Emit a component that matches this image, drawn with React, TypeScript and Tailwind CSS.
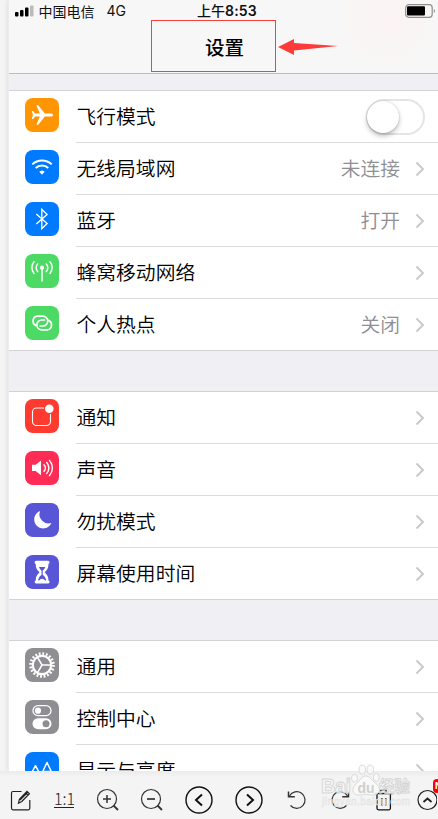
import type { ReactNode } from 'react';

interface RowProps {
  label: string;
  color: string;
  icon: ReactNode;
  value?: string;
  toggle?: boolean;
}

const stroke = { fill: 'none', stroke: '#fff', strokeLinecap: 'round', strokeLinejoin: 'round' } as const;

const icons = {
  plane: (
    <path fill="#fff" d="M28 17c0-1-1-1.500-2.200-1.500h-5.900L13.200 7.200h-1.900l3.600 8.300h-4.700l-2.100-2.600H6.800L7.900 17l-1.100 4.100h1.300l2.100-2.600h4.700l-3.600 8.300h1.900l6.700-8.300h5.900C27 18.500 28 18 28 17z" />
  ),
  wifi: (
    <g {...stroke} strokeLinecap="butt" strokeWidth={2}>
      <path d="M7.300 14.400a14 14 0 0 1 19.400 0" />
      <path d="M10.700 18a9.200 9.200 0 0 1 12.600 0" />
      <path d="M14.800 21.800a3.500 3.500 0 0 1 4.400 0L17 24.200z" fill="#fff" strokeWidth={1} />
    </g>
  ),
  bluetooth: <path {...stroke} strokeLinecap="butt" strokeLinejoin="miter" strokeWidth={1.350} d="M11.300 12l10.800 9.500-5.300 5.200V7.300l5.300 5.200L11.300 22" />,
  cellular: (
    <g {...stroke} strokeWidth={1.500}>
      <path d="M17 15v12" />
      <circle cx="17" cy="13.700" r="2.100" fill="#fff" stroke="none" />
      <path d="M12.700 10a5.500 5.500 0 0 0 0 7.600M21.300 10a5.500 5.500 0 0 1 0 7.600M9 7.800a9 9 0 0 0 0 11.600M25 7.800a9 9 0 0 1 0 11.600" />
    </g>
  ),
  hotspot: (
    <g {...stroke} strokeWidth={1.700}>
      <path d="M11.200 19.600a4.900 4.900 0 0 1 1-9.400h5.600a4.900 4.900 0 0 1 0 9.800h-2.600" />
      <path d="M23.400 14.400a4.900 4.900 0 0 1-1 9.400h-5.600a4.900 4.900 0 0 1 0-9.800h2.600" />
    </g>
  ),
  notice: (
    <g>
      <path {...stroke} strokeWidth={1.100} d="M18.800 9h-7.300a4 4 0 0 0-4 4v9.500a4 4 0 0 0 4 4h10a4 4 0 0 0 4-4v-7" />
      <circle cx="24.300" cy="9.800" r="4.300" fill="#fff" />
    </g>
  ),
  sound: (
    <g>
      <path fill="#fff" d="M7 13.800h3.700l5.300-4.300v14.800l-5.300-4.300H7z" />
      <path {...stroke} strokeWidth={1.400} d="M19 13.700a5 5 0 0 1 0 6.600M21.700 11.500a8.200 8.200 0 0 1 0 11M24.500 9.400a11.500 11.500 0 0 1 0 15.200" />
    </g>
  ),
  moon: <path fill="#fff" d="M15.100 8a9 9 0 1 0 11.300 12.100A9.200 9.200 0 0 1 15.100 8z" />,
  hourglass: (
    <g>
      <path fill="#fff" d="M11 5.800h12.200a1.600 1.600 0 0 1 .3 3.100c0 4.200-1.500 6.200-3.900 8.300 2.400 2.200 3.900 4.200 3.900 8.200a1.600 1.600 0 0 1-.3 3.100H11a1.600 1.600 0 0 1-.3-3.100c0-4 1.500-6 3.900-8.200-2.400-2.100-3.900-4.100-3.900-8.300A1.600 1.600 0 0 1 11 5.800z" />
      <path fill="#5856d6" d="M14 12h6.300c-.6 1.700-1.600 2.700-2.600 3.600v4.300c1.600.9 3 2.300 3.500 5.500h-8.100c.5-3.200 1.900-4.600 3.400-5.500v-4.300c-1-.9-1.900-1.900-2.500-3.600z" />
      <path stroke="#fff" strokeWidth={1} fill="#fff" d="M14.500 25.500c1.200-.8 1.900-1.300 2.600-1.300s1.500.5 2.700 1.300z" />
    </g>
  ),
  gear: (
    <g stroke="#fff" fill="none">
      <circle cx="17" cy="17" r="9.200" strokeWidth={2.200} />
      <circle cx="17" cy="17" r="11.400" strokeWidth={2.800} strokeDasharray="1.850 1.731" />
      <path strokeWidth={1.500} d="M17 17h9M17 17l-4.600-7.900M17 17l-4.600 7.900" />
    </g>
  ),
  control: (
    <g>
      <rect x="8" y="5.700" width="18" height="9.900" rx="4.950" {...stroke} strokeWidth={1.300} />
      <circle cx="13" cy="10.650" r="3.100" fill="#fff" />
      <rect x="7.500" y="18.200" width="19" height="11" rx="5.500" fill="#fff" />
      <circle cx="21" cy="23.700" r="3.500" fill="#8e8e93" />
    </g>
  ),
  display: (
    <g {...stroke} strokeWidth={1.500}>
      <path d="M5.500 23l5-9.300 5 9.300M7 20.500h7M16 23l6-12.500L28 23M18 19.500h8" />
    </g>
  )
};

const groups: RowProps[][] = [
  [
    { label: '飞行模式', color: 'bg-[#ff9500]', icon: icons.plane, toggle: true },
    { label: '无线局域网', color: 'bg-[#007aff]', icon: icons.wifi, value: '未连接' },
    { label: '蓝牙', color: 'bg-[#007aff]', icon: icons.bluetooth, value: '打开' },
    { label: '蜂窝移动网络', color: 'bg-[#4cd964]', icon: icons.cellular },
    { label: '个人热点', color: 'bg-[#4cd964]', icon: icons.hotspot, value: '关闭' }
  ],
  [
    { label: '通知', color: 'bg-[#ff3b30]', icon: icons.notice },
    { label: '声音', color: 'bg-[#ff2d55]', icon: icons.sound },
    { label: '勿扰模式', color: 'bg-[#5856d6]', icon: icons.moon },
    { label: '屏幕使用时间', color: 'bg-[#5856d6]', icon: icons.hourglass }
  ],
  [
    { label: '通用', color: 'bg-[#8e8e93]', icon: icons.gear },
    { label: '控制中心', color: 'bg-[#8e8e93]', icon: icons.control },
    { label: '显示与亮度', color: 'bg-[#007aff]', icon: icons.display }
  ]
];

function Row({ label, color, icon, value, toggle }: RowProps) {
  return (
    <div className="group flex h-[52px] shrink-0 pl-[17px] last:h-[51px]">
      <div className={`mt-[7px] h-[34px] w-[34px] shrink-0 rounded-[8px] ${color}`}>
        <svg width="34" height="34" viewBox="0 0 34 34">{icon}</svg>
      </div>
      <div className="ml-[17px] flex flex-1 items-center border-b border-[#dcdcde] pr-[13px] text-[19.8px] font-[350] leading-[49px] group-last:border-b-0">
        <span className="flex-1 whitespace-nowrap pl-[0.5px] pt-[2px] text-black">{label}</span>
        {value && <span className="mr-[15px] pt-[2px] text-[#8e8e93]">{value}</span>}
        {toggle ? (
          <div className="flex h-[36px] w-[59px] items-center rounded-full border-2 border-[#e5e5e5] bg-white">
            <div className="-ml-px h-[32px] w-[32px] rounded-full bg-white shadow-[0_3px_5px_rgba(0,0,0,0.25),0_0_2px_rgba(0,0,0,0.2)]" />
          </div>
        ) : (
          <svg width="10" height="16" viewBox="0 0 10 16" fill="none" stroke="#c7c7cc" strokeWidth={1.800}>
            <path d="M1.500 1.500L8 8l-6.500 6.500" />
          </svg>
        )}
      </div>
    </div>
  );
}

function StatusBar() {
  return (
    <div className="relative flex h-[22px] items-center pl-[6px] text-[14px] text-[#111]">
      <svg width="20" height="12" viewBox="0 0 20 12">
        <rect x="1" y="7" width="3.500" height="4.500" rx="1" />
        <rect x="6" y="5" width="3.500" height="6.500" rx="1" />
        <rect x="11" y="2.500" width="3.500" height="9" rx="1" />
        <rect x="16" y="0.500" width="3.500" height="11" rx="1" fill="#bbb" />
      </svg>
      <span className="ml-[4.500px]">中国电信</span>
      <span className="ml-[12px] -mt-px">4G</span>
      <span className="absolute left-[189px] -top-px flex h-[22px] items-center font-medium">
        上午<span className="font-semibold tracking-[0.2px]">8:53</span>
      </span>
      <svg className="absolute left-[397px] top-[4px]" width="32" height="14" viewBox="0 0 32 14">
        <rect x="0.700" y="0.700" width="26.500" height="12.600" rx="3" fill="none" stroke="#8f8f8f" strokeWidth={1.200} />
        <rect x="2" y="2.300" width="18" height="9.300" rx="1" />
        <path d="M28.800 5c1.500.6 1.500 3.400 0 4z" fill="#888" />
      </svg>
    </div>
  );
}

function Watermark() {
  return (
    <svg className="absolute left-[318px] -top-[8px]" width="96" height="48" viewBox="0 0 96 48" fill="#fafafa" stroke="#d2d2d2" strokeWidth={0.900} opacity={0.9}>
      <g fontFamily="Liberation Sans, sans-serif" fontWeight="bold">
        <text x="3" y="29.500" fontSize="20" textLength="30">Bai</text>
        <ellipse cx="36.500" cy="15.300" rx="3" ry="3.900" />
        <ellipse cx="44.300" cy="6.500" rx="3.200" ry="4.500" />
        <ellipse cx="52.300" cy="6.500" rx="3.200" ry="4.500" />
        <ellipse cx="58.300" cy="14.500" rx="3" ry="3.900" />
        <path d="M47.500 13c-4 0-4.500 4-9 7.500-5 4-5 10.500 1 11.500 4 .5 5-.8 8-.8s5 1.200 9 .8c6-1 6.500-8 1.500-11.500-5-3.500-5.500-7.500-10.500-7.500z" />
        <text x="39.500" y="29.500" fontSize="14" stroke="none" fill="#cccccc">du</text>
        <text x="61" y="28.500" fontSize="15.500" textLength="31" fontFamily="Noto Sans CJK SC, sans-serif">经验</text>
      </g>
      <text x="4" y="42" fontSize="10" textLength="88" stroke="#e0e0e0" strokeWidth={0.500} fontFamily="Liberation Sans, sans-serif">jingyan.baidu.com</text>
    </svg>
  );
}

function Toolbar() {
  return (
    <div className="relative h-[48px] shrink-0 bg-gradient-to-b from-[#ebebeb] to-[#f4f4f4] to-[12%]">
      <div className="flex h-full items-center pt-[10px]">
        <svg className="ml-[10px]" width="22" height="22" viewBox="0 0 22 22" fill="none" stroke="#222" strokeWidth={1.200}>
          <path d="M11.500 2.500H3a1.500 1.500 0 0 0-1.500 1.500v15.300A1.500 1.500 0 0 0 3 20.800h15.300a1.500 1.500 0 0 0 1.500-1.500V11" />
          <path d="M8.500 14.200l.9-4L17 2.300l2.400 2.400-7.600 7.800zM10 11l7.700-7.700M15.600 3.700L18 6.100" />
        </svg>
        <span className="-mt-[3px] ml-[22px] w-[20px] border-b border-[#222] text-center font-['Noto_Sans_CJK_SC',sans-serif] text-[16px] font-light leading-[18px] text-[#222]">1:1</span>
        <svg className="ml-[22px]" width="24" height="24" viewBox="0 0 24 24" fill="none" stroke="#333" strokeWidth={1.200}>
          <circle cx="11" cy="11" r="9.500" />
          <path d="M17.500 17.500l4.500 4.500" strokeWidth={1.800} />
          <path d="M7 11h8M11 7v8" strokeWidth={1.500} />
        </svg>
        <svg className="ml-[20px]" width="24" height="24" viewBox="0 0 24 24" fill="none" stroke="#333" strokeWidth={1.200}>
          <circle cx="11" cy="11" r="9.500" />
          <path d="M17.500 17.500l4.500 4.500" strokeWidth={1.800} />
          <path d="M7 11h8" strokeWidth={1.700} />
        </svg>
        <svg className="ml-[21px] -mt-px" width="28" height="28" viewBox="0 0 28 28" fill="none" stroke="#111" strokeWidth={1.400}>
          <circle cx="14" cy="14" r="13" />
          <path d="M17 8.500L11 14l6 5.500" strokeWidth={2} />
        </svg>
        <svg className="ml-[22px] -mt-px" width="28" height="28" viewBox="0 0 28 28" fill="none" stroke="#111" strokeWidth={1.400}>
          <circle cx="14" cy="14" r="13" />
          <path d="M12 8.500l6 5.500-6 5.500" strokeWidth={2} />
        </svg>
        <svg className="ml-[23px]" width="22" height="22" viewBox="0 0 22 22" fill="none" stroke="#333" strokeWidth={1.200}>
          <path d="M3.500 7A8.300 8.300 0 1 1 4.500 16.500" />
          <path d="M2.500 2.500v5.300h6.300" strokeWidth={1.500} />
        </svg>
        <svg className="ml-[22px]" width="22" height="22" viewBox="0 0 22 22" fill="none" stroke="#333" strokeWidth={1.200}>
          <path d="M17.500 7A8.300 8.300 0 1 0 16.500 16.500" />
          <path d="M18.500 2.500v5.300h-6.300" strokeWidth={1.500} />
        </svg>
        <svg className="ml-[21px]" width="22" height="22" viewBox="0 0 22 22" fill="none" stroke="#111" strokeWidth={1.300}>
          <path d="M1.500 4.500h18M7.500 4V1.500h5.500V4M4 4.500v14.800a1.500 1.500 0 0 0 1.500 1.500h10.400a1.500 1.500 0 0 0 1.500-1.500V4.500M9 9v7.500M12.700 9v7.500" />
        </svg>
        <svg className="ml-[22px] shrink-0" width="20" height="22" viewBox="0 0 20 22" fill="none" stroke="#222" strokeWidth={1.200}>
          <circle cx="10.500" cy="11" r="9.500" />
          <path d="M6.500 13l4-3.500 4 3.500" strokeWidth={1.800} />
        </svg>
      </div>
      <div className="absolute right-0 top-[8px] h-[14px] w-[5px] overflow-hidden rounded-l-[4px] bg-[#f00] text-[9px] font-bold leading-[14px] text-white">
        <span className="ml-[2px]">N</span>
      </div>
      <Watermark />
    </div>
  );
}

export default function App() {
  return (
    <div className="flex h-[819px] w-[438px] flex-col overflow-hidden bg-[#f4f4f4] font-['Inter','Noto_Sans_CJK_SC',sans-serif]">
      <div className="ml-2 flex h-[771px] flex-col overflow-hidden border-l border-[#ececec] bg-[#efeff4] shadow-[0_0_5px_rgba(0,0,0,0.12)]">
        <header className="relative -ml-px h-[74px] shrink-0 border-b border-[#bdbdc1] bg-[#f7f7f7] bg-[radial-gradient(circle_at_380px_18px,#fbf3f2_0,#f7f7f7_60px)]">
          <StatusBar />
          <div className="ml-[143px] -mt-[2px] flex h-[52px] w-[125px] items-center border border-[#f4413b] pl-[53px] pt-[5px] text-[19.5px] font-medium leading-none text-black">
            设置
          </div>
          <svg className="absolute left-[270px] top-[38px]" width="62" height="18" viewBox="0 0 62 18" fill="#ff3b3a">
            <path d="M0 9L16 1v4l44 3-44 4.500V17z" />
          </svg>
        </header>
        {groups.map((rows, i) => (
          <section
            key={i}
            className={`-ml-px shrink-0 border-y border-[#d3d3d7] bg-white ${i === 0 ? 'mt-[16px]' : 'mt-[40px]'}`}
          >
            {rows.map((row) => (
              <Row key={row.label} {...row} />
            ))}
          </section>
        ))}
      </div>
      <Toolbar />
    </div>
  );
}
